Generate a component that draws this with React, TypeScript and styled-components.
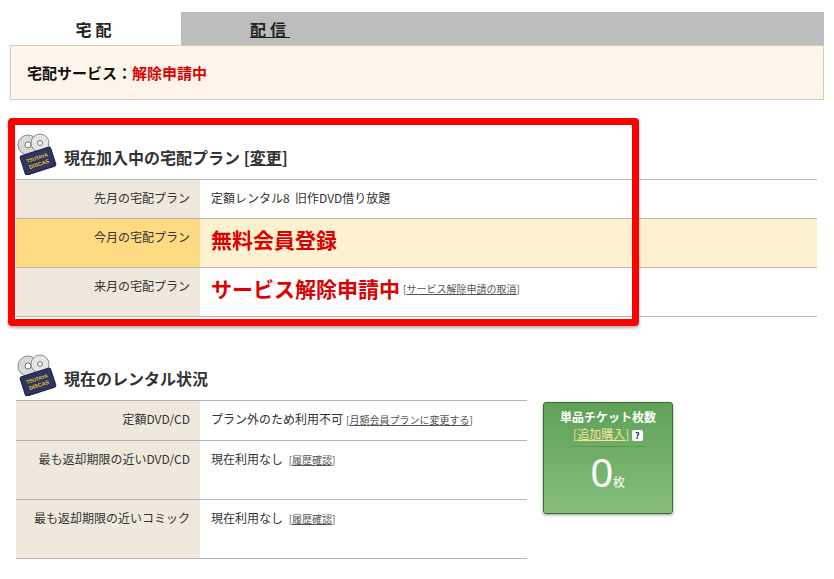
import styled, { createGlobalStyle } from 'styled-components';

const GlobalStyle = createGlobalStyle`
  body {
    margin: 0;
    background: #fff;
    font-family: "Noto Sans CJK JP", "Noto Sans", sans-serif;
    color: #333;
  }
`;

function DiscasIcon() {
  return (
    <svg width="42" height="42" viewBox="0 0 42 42">
      <circle cx="12" cy="12" r="10" fill="#d8d8d8" stroke="#888" strokeWidth="1" />
      <circle cx="12" cy="12" r="3" fill="#fff" stroke="#777" strokeWidth="1" />
      <circle cx="24" cy="10" r="9" fill="#e6e6e6" stroke="#888" strokeWidth="1" />
      <circle cx="24" cy="10" r="2.5" fill="#fff" stroke="#777" strokeWidth="1" />
      <g transform="rotate(-18 22 28)">
        <rect x="6" y="18" width="32" height="20" rx="2" fill="#2e3563" stroke="#1b1f3d" />
        <text x="22" y="26.5" fontSize="5" fontWeight="bold" fill="#f0c419" textAnchor="middle" fontFamily="Liberation Sans">TSUTAYA</text>
        <text x="22" y="33" fontSize="5.5" fontWeight="bold" fill="#f0c419" textAnchor="middle" fontFamily="Liberation Sans">DISCAS</text>
      </g>
    </svg>
  );
}

export default function App() {
  return (
    <>
      <GlobalStyle />
      <Page>
        <Tabs>
          <Tab active>宅配</Tab>
          <Tab>
            <u>配信</u>
          </Tab>
        </Tabs>
        <StatusBox>
          宅配サービス：<Red>解除申請中</Red>
        </StatusBox>

        <Section top={25}>
          <Highlight />
          <SectionHead>
            <DiscasIcon />
            <SectionTitle>
              現在加入中の宅配プラン [<u>変更</u>]
            </SectionTitle>
          </SectionHead>
          <Table>
            <Row height={39}>
              <Label>先月の宅配プラン</Label>
              <Value>定額レンタル8&nbsp;&nbsp;旧作DVD借り放題</Value>
            </Row>
            <Row height={49} current>
              <Label current>今月の宅配プラン</Label>
              <Value>
                <BigRed>無料会員登録</BigRed>
              </Value>
            </Row>
            <Row height={49}>
              <Label>来月の宅配プラン</Label>
              <Value>
                <BigRed>サービス解除申請中</BigRed>
                <SmallLink>
                  [<u>サービス解除申請の取消</u>]
                </SmallLink>
              </Value>
            </Row>
          </Table>
        </Section>

        <Section top={29}>
          <SectionHead>
            <DiscasIcon />
            <SectionTitle>現在のレンタル状況</SectionTitle>
          </SectionHead>
          <RentalWrap>
            <Table narrow>
              <Row height={40}>
                <Label>定額DVD/CD</Label>
                <Value>
                  プラン外のため利用不可
                  <SmallLink>
                    [<u>月額会員プランに変更する</u>]
                  </SmallLink>
                </Value>
              </Row>
              <Row height={59}>
                <Label>最も返却期限の近いDVD/CD</Label>
                <Value>
                  現在利用なし <SmallLink>[<u>履歴確認</u>]</SmallLink>
                </Value>
              </Row>
              <Row height={59}>
                <Label>最も返却期限の近いコミック</Label>
                <Value>
                  現在利用なし <SmallLink>[<u>履歴確認</u>]</SmallLink>
                </Value>
              </Row>
            </Table>
            <TicketBox>
              <TicketTitle>単品チケット枚数</TicketTitle>
              <TicketLink>
                [<u>追加購入</u>] <Help>?</Help>
              </TicketLink>
              <TicketDivider />
              <TicketCount>
                0<span>枚</span>
              </TicketCount>
            </TicketBox>
          </RentalWrap>
        </Section>
      </Page>
    </>
  );
}

const Page = styled.div`
  padding: 12px 10px 0;
`;

const Tabs = styled.div`
  display: flex;
  height: 33px;
`;

const Tab = styled.div<{ active?: boolean }>`
  width: ${(p) => (p.active ? '171px' : 'auto')};
  flex: ${(p) => (p.active ? 'none' : '1')};
  background: ${(p) => (p.active ? '#fff' : '#bdbdbd')};
  display: flex;
  align-items: center;
  justify-content: ${(p) => (p.active ? 'center' : 'flex-start')};
  padding-left: ${(p) => (p.active ? '0' : '69px')};
  font-size: 16px;
  font-weight: bold;
  letter-spacing: 4px;
  color: #222;
`;

const StatusBox = styled.div`
  height: 55px;
  box-sizing: border-box;
  border: 1px solid #d8cdb5;
  background: #fdf5ea;
  display: flex;
  align-items: center;
  padding-left: 16px;
  font-size: 15px;
  font-weight: bold;
  color: #111;
`;

const Red = styled.span`
  color: #dd0000;
`;

const Section = styled.section<{ top: number }>`
  position: relative;
  margin: ${(p) => p.top}px 0 0 6px;
`;

const Highlight = styled.div`
  position: absolute;
  left: -8px;
  top: -7px;
  width: 631px;
  height: 208px;
  box-sizing: border-box;
  border: 7px solid #ff0000;
  border-radius: 4px;
  box-shadow: 0 2px 3px rgba(0, 0, 0, 0.3);
  pointer-events: none;
  z-index: 2;
`;

const SectionHead = styled.div`
  display: flex;
  align-items: flex-end;
  gap: 6px;
  height: 54px;
  padding-bottom: 4px;
  box-sizing: border-box;
`;

const SectionTitle = styled.h2`
  margin: 0 0 6px;
  font-size: 16px;
  font-weight: bold;
  color: #333;
`;

const RentalWrap = styled.div`
  display: flex;
  align-items: flex-start;
  gap: 16px;
`;

const Table = styled.div<{ narrow?: boolean }>`
  width: ${(p) => (p.narrow ? '511px' : '801px')};
  border-top: 1px solid #b5b5b5;
`;

const Row = styled.div<{ height: number; current?: boolean }>`
  display: flex;
  box-sizing: border-box;
  height: ${(p) => p.height}px;
  border-bottom: 1px solid #b5b5b5;
  background: ${(p) => (p.current ? '#fdf1d0' : '#fff')};
`;

const Label = styled.div<{ current?: boolean }>`
  width: 184px;
  flex: none;
  box-sizing: border-box;
  background: ${(p) => (p.current ? '#fedb82' : '#efe8dc')};
  text-align: right;
  padding: 9px 10px 0 0;
  font-size: 12px;
  color: #333;
`;

const Value = styled.div`
  padding: 9px 0 0 11px;
  font-size: 12px;
  color: #333;
`;

const BigRed = styled.span`
  display: inline-block;
  margin-top: -4px;
  font-size: 21px;
  font-weight: bold;
  color: #dd0000;
  vertical-align: middle;
`;

const SmallLink = styled.span`
  font-size: 10px;
  color: #555;
  margin-left: 3px;
`;

const TicketBox = styled.div`
  margin-top: 2px;
  width: 130px;
  height: 112px;
  box-sizing: border-box;
  border: 1px solid #3d6b37;
  border-radius: 3px;
  background: linear-gradient(#5ea157, #86bf7c);
  box-shadow: 0 1px 3px rgba(0, 0, 0, 0.4);
  color: #fff;
  text-align: center;
  padding-top: 5px;
`;

const TicketTitle = styled.div`
  font-size: 12px;
  font-weight: bold;
`;

const TicketLink = styled.div`
  font-size: 12px;
  color: #f6e39a;
`;

const Help = styled.span`
  display: inline-block;
  width: 11px;
  height: 11px;
  line-height: 11px;
  background: #fff;
  color: #1b2454;
  font-size: 9px;
  font-weight: bold;
  border-radius: 2px;
`;

const TicketDivider = styled.div`
  margin: 4px 10px 0;
  height: 1px;
  background: linear-gradient(90deg, transparent, #4d8a46, transparent);
`;

const TicketCount = styled.div`
  font-size: 40px;
  line-height: 52px;
  font-family: "Liberation Sans", sans-serif;
  span {
    font-size: 12px;
    font-family: "Noto Sans CJK JP", sans-serif;
  }
`;
